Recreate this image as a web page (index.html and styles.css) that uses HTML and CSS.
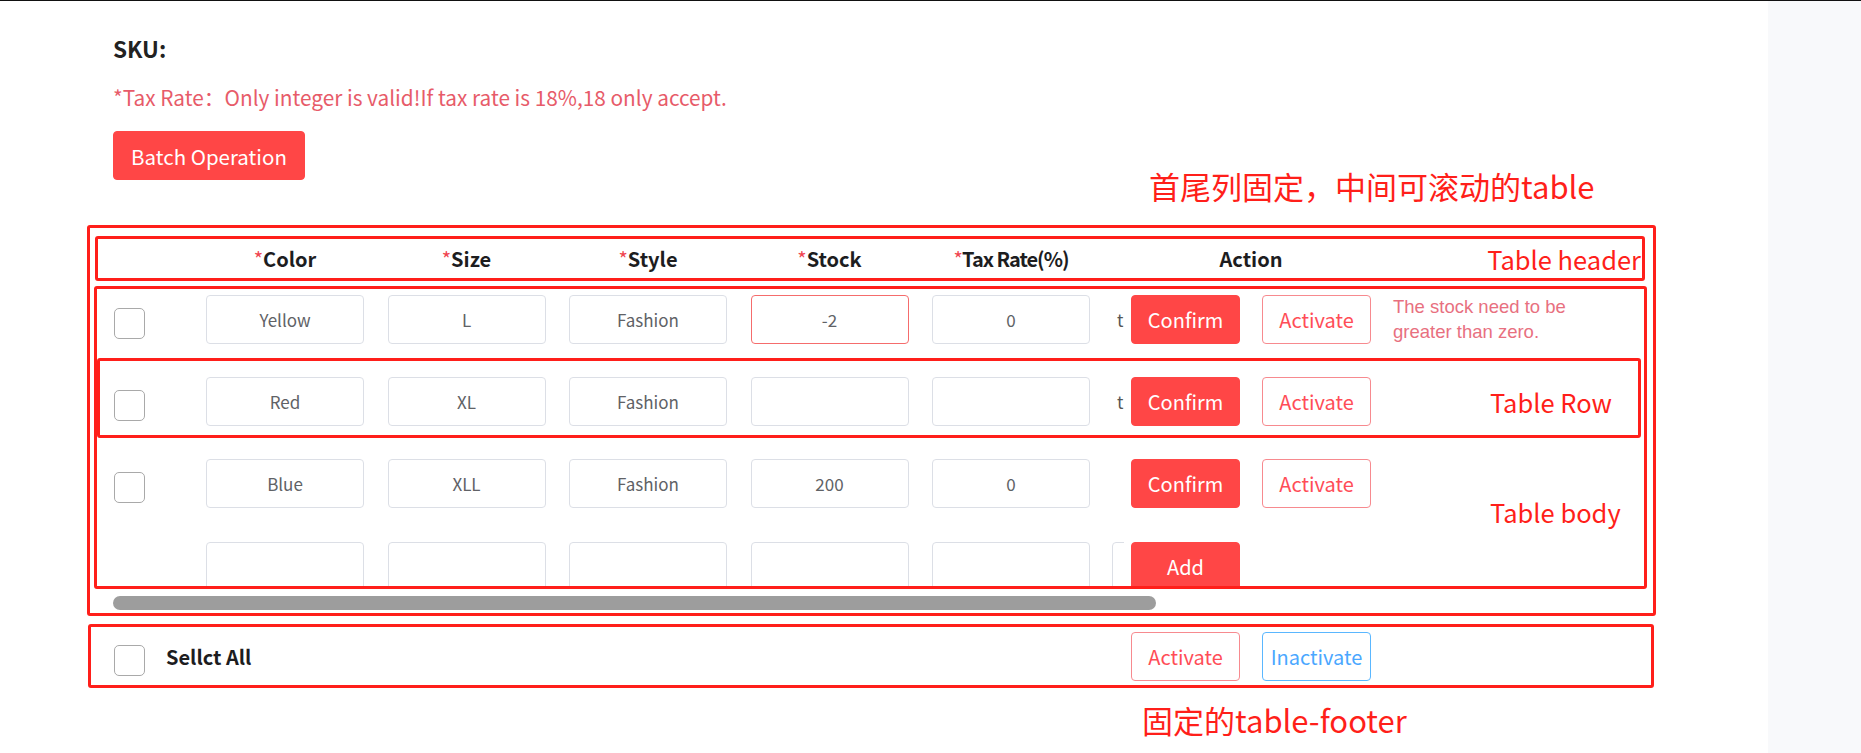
FILE: index.html
```html
<!DOCTYPE html>
<html lang="en">
<head>
<meta charset="utf-8">
<title>SKU table</title>
<link rel="stylesheet" href="styles.css">
</head>
<body>
<div class="topline"></div>
<div class="layout">
  <main class="main">
    <div class="intro">
      <div class="sku">SKU:</div>
      <div class="tip">*Tax Rate：Only integer is valid!If tax rate is 18%,18 only accept.</div>
      <div class="batch-row">
        <button class="btn btn-fill btn-batch">Batch Operation</button>
        <div class="note note-top">首尾列固定，中间可滚动的table</div>
      </div>
    </div>

    <section class="table-wrap">
      <div class="thead">
        <div class="th-lead"></div>
        <div class="th-cells">
          <div class="th"><span class="req">*</span>Color</div>
          <div class="th"><span class="req">*</span>Size</div>
          <div class="th"><span class="req">*</span>Style</div>
          <div class="th"><span class="req">*</span>Stock</div>
          <div class="th th-tax"><span class="req">*</span>Tax Rate(%)</div>
        </div>
        <div class="th th-action">Action</div>
        <div class="label label-header">Table header</div>
      </div>

      <div class="tbody">
        <div class="row">
          <div class="scroll">
            <span class="checkbox"></span>
            <div class="cells">
              <div class="input">Yellow</div>
              <div class="input">L</div>
              <div class="input">Fashion</div>
              <div class="input input-error">-2</div>
              <div class="input">0</div>
              <div class="extra"><span class="peek">t</span></div>
            </div>
          </div>
          <div class="actions">
            <button class="btn btn-fill">Confirm</button>
            <button class="btn btn-outline">Activate</button>
            <div class="error">
              <div class="error-line">The stock need to be</div>
              <div class="error-line">greater than zero.</div>
            </div>
          </div>
        </div>

        <div class="row row-marked">
          <div class="scroll">
            <span class="checkbox"></span>
            <div class="cells">
              <div class="input">Red</div>
              <div class="input">XL</div>
              <div class="input">Fashion</div>
              <div class="input"></div>
              <div class="input"></div>
              <div class="extra"><span class="peek">t</span></div>
            </div>
          </div>
          <div class="actions">
            <button class="btn btn-fill">Confirm</button>
            <button class="btn btn-outline">Activate</button>
          </div>
          <div class="label label-row">Table Row</div>
        </div>

        <div class="row">
          <div class="scroll">
            <span class="checkbox"></span>
            <div class="cells">
              <div class="input">Blue</div>
              <div class="input">XLL</div>
              <div class="input">Fashion</div>
              <div class="input">200</div>
              <div class="input">0</div>
              <div class="extra"></div>
            </div>
          </div>
          <div class="actions">
            <button class="btn btn-fill">Confirm</button>
            <button class="btn btn-outline">Activate</button>
          </div>
        </div>

        <div class="row row-add">
          <div class="scroll">
            <span class="checkbox-space"></span>
            <div class="cells">
              <div class="input"></div>
              <div class="input"></div>
              <div class="input"></div>
              <div class="input"></div>
              <div class="input"></div>
              <div class="extra input"></div>
            </div>
          </div>
          <div class="actions">
            <button class="btn btn-fill">Add</button>
          </div>
        </div>

        <div class="label label-body">Table body</div>
      </div>

      <div class="scrollbar"></div>
    </section>

    <div class="tfoot">
      <span class="checkbox checkbox-foot"></span>
      <span class="select-all">Sellct All</span>
      <div class="foot-actions">
        <button class="btn btn-outline">Activate</button>
        <button class="btn btn-outline-blue">Inactivate</button>
      </div>
    </div>

    <div class="note note-bottom">固定的table-footer</div>
  </main>
  <aside class="side"></aside>
</div>
</body>
</html>
```

FILE: styles.css
```css
* { box-sizing: border-box; }

html, body {
  margin: 0;
  padding: 0;
  background: #ffffff;
  font-family: "Noto Sans CJK SC", "Noto Sans", sans-serif;
  color: #303133;
}

.topline {
  height: 1px;
  background: #111111;
}

.layout {
  display: flex;
  height: 752px;
  overflow: hidden;
}

.main {
  width: 1768px;
  flex: none;
  padding-left: 87px;
  background: #ffffff;
}

.side {
  flex: 1;
  background: #f8f9fb;
}

/* intro */
.intro {
  padding-left: 26px;
}

.sku {
  margin-top: 33px;
  font-size: 22.5px;
  line-height: 28px;
  font-weight: 600;
  color: #222;
}

.tip {
  margin-top: 21px;
  font-size: 20.8px;
  line-height: 28px;
  color: #e75b69;
}

.batch-row {
  display: flex;
  align-items: flex-start;
  margin-top: 20px;
}

.btn {
  font-family: inherit;
  width: 109px;
  height: 49px;
  padding: 0;
  border-radius: 4px;
  font-size: 20px;
  cursor: pointer;
  flex: none;
}

.btn-fill {
  background: #ff4646;
  border: 1px solid #ff4646;
  color: #ffffff;
}

.btn-batch {
  width: 192px;
  font-size: 20.5px;
}

.btn-outline {
  background: #ffffff;
  border: 1px solid #f78a8f;
  color: #ff4d57;
}

.btn-outline-blue {
  background: #ffffff;
  border: 1px solid #5ab7ff;
  color: #4aa7ff;
}

.note {
  color: #ff1f1a;
  font-size: 31px;
  line-height: 36px;
  white-space: nowrap;
}

.note-top {
  margin-top: 37px;
  margin-left: 844px;
}

.note-bottom {
  margin-top: 14px;
  margin-left: 1055px;
}

/* table */
.table-wrap {
  margin-top: 21px;
  width: 1569px;
  height: 391px;
  border: 3px solid #ff1f1a;
  border-radius: 3px;
}

.thead {
  margin: 8px 8px 0 5px;
  height: 45px;
  border: 3px solid #ff1f1a;
  border-radius: 3px;
  display: flex;
  align-items: center;
}

.th-lead {
  width: 108px;
  flex: none;
}

.th-cells {
  display: flex;
  gap: 23.5px;
}

.th {
  width: 158px;
  flex: none;
  text-align: center;
  font-size: 20px;
  font-weight: 700;
  color: #1d1d1f;
  white-space: nowrap;
}

.th-tax {
  letter-spacing: -1px;
}

.req {
  color: #f0454f;
  font-weight: 400;
}

.th-action {
  width: 240px;
  margin-left: 41px;
}

.label {
  color: #ff1f1a;
  font-size: 25.5px;
  line-height: 34px;
  white-space: nowrap;
}

.label-header {
  margin-left: auto;
  margin-right: 1px;
}

.tbody {
  position: relative;
  margin: 5px 6px 0 4px;
  height: 303px;
  border: 3px solid #ff1f1a;
  border-radius: 3px;
  overflow: hidden;
  padding-top: 2px;
  display: flex;
  flex-direction: column;
}

.row {
  display: flex;
  align-items: center;
  border: 3px solid transparent;
  border-radius: 3px;
  margin-right: 3px;
  flex: none;
}

.row + .row {
  margin-top: 27px;
}

.row.row-marked {
  border-color: #ff1f1a;
  padding: 16px 0 9px;
  margin-top: 11px;
  margin-bottom: -9px;
}

.row.row-add {
  margin-top: 28px;
}

.scroll {
  width: 1024px;
  flex: none;
  overflow: hidden;
  display: flex;
  align-items: center;
  padding-left: 14px;
}

.checkbox,
.checkbox-space {
  width: 31px;
  height: 31px;
  flex: none;
  margin-right: 61px;
}

.checkbox {
  display: inline-block;
  border: 1.5px solid #a9a9a9;
  border-radius: 5px;
  background: #fff;
  margin-top: 8px;
}

.cells {
  display: flex;
  gap: 23.5px;
  flex: none;
}

.input {
  width: 158px;
  height: 49px;
  flex: none;
  border: 1px solid #dcdfe6;
  border-radius: 4px;
  display: flex;
  align-items: center;
  justify-content: center;
  font-size: 17px;
  color: #606266;
}

.input-error {
  border-color: #f56c6c;
}

.extra {
  width: 158px;
  height: 49px;
  flex: none;
  margin-left: -1.5px;
  display: flex;
  align-items: center;
}

.extra.input {
  justify-content: flex-start;
}

.peek {
  padding-left: 5px;
  font-size: 17px;
  color: #555;
}

.actions {
  display: flex;
  align-items: center;
  gap: 22px;
  margin-left: 7px;
}

.error {
  display: flex;
  flex-direction: column;
  color: #e8707f;
  white-space: nowrap;
  font-family: "Liberation Sans", "Noto Sans CJK SC", sans-serif;
}

.error-line {
  font-size: 18.5px;
  line-height: 25px;
  height: 25px;
}

.label-row {
  margin-left: auto;
  margin-right: 26px;
}

.label-body {
  position: absolute;
  left: 1393px;
  top: 206px;
}

.scrollbar {
  margin: 7px 0 0 23px;
  width: 1043px;
  height: 14px;
  border-radius: 7px;
  background: #9d9d9d;
}

/* footer */
.tfoot {
  margin: 8px 0 0 1px;
  width: 1566px;
  height: 64px;
  border: 3px solid #ff1f1a;
  border-radius: 3px;
  display: flex;
  align-items: center;
  padding-left: 23px;
}

.checkbox.checkbox-foot {
  margin-right: 21px;
  margin-top: 8px;
}

.select-all {
  font-size: 20px;
  font-weight: 700;
  color: #1d1d1f;
}

.foot-actions {
  display: flex;
  gap: 22px;
  margin-left: auto;
  margin-right: 280px;
}
```
